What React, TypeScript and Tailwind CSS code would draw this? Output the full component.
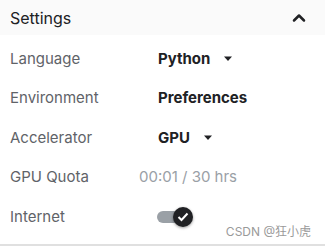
import { ChevronUp } from "lucide-react";

function Caret() {
  return (
    <svg width="10" height="6" viewBox="0 0 10 6" className="ml-[13px]">
      <path d="M1 0.5 L9 0.5 L5 5 Z" fill="#202124" />
    </svg>
  );
}

function Row({ label, children }: { label: string; children: React.ReactNode }) {
  return (
    <div className="flex items-center h-[39.5px]">
      <div className="w-[139px] pl-[10px] text-[15px] text-[#5f6368]">{label}</div>
      <div className="flex items-center">{children}</div>
    </div>
  );
}

export default function App() {
  return (
    <div
      className="relative w-[325px] h-[246px] bg-white flex flex-col border-b-2 border-[#e0e0e0]"
      style={{ fontFamily: "Inter, 'Noto Sans CJK SC', sans-serif" }}
    >
      <div className="shrink-0 h-[35px] bg-[#fafafa] flex items-center justify-between pl-[10px] pr-[16px]">
        <span className="text-[16px] text-[#202124]">Settings</span>
        <ChevronUp size={20} strokeWidth={3} color="#202124" />
      </div>
      <div className="flex flex-col pt-[4px]">
        <Row label="Language">
          <span className="ml-[19px] text-[15px] font-bold text-[#202124]">Python</span>
          <Caret />
        </Row>
        <Row label="Environment">
          <span className="ml-[19px] text-[15px] font-bold text-[#202124]">Preferences</span>
        </Row>
        <Row label="Accelerator">
          <span className="ml-[19px] text-[15px] font-bold text-[#202124]">GPU</span>
          <Caret />
        </Row>
        <Row label="GPU Quota">
          <span className="text-[15px] text-[#9aa0a6]">00:01 / 30 hrs</span>
        </Row>
        <Row label="Internet">
          <div className="ml-[18px] relative w-[36px] h-[20px] flex items-center">
            <div className="w-[30px] h-[12px] rounded-full bg-[#9aa0a6]" />
            <div className="absolute right-0 top-0 w-[20px] h-[20px] rounded-full bg-[#202124] shadow-[0_1px_3px_rgba(0,0,0,0.4)] flex items-center justify-center">
              <svg width="12" height="10" viewBox="0 0 12 10">
                <path d="M1.5 5 L4.5 8 L10.5 1.5" stroke="white" strokeWidth="2" fill="none" />
              </svg>
            </div>
          </div>
        </Row>
      </div>
      <div className="absolute right-[14px] bottom-[4px] text-[12px] leading-[16px] text-[#9a9a9a]">
        CSDN @狂小虎
      </div>
    </div>
  );
}
